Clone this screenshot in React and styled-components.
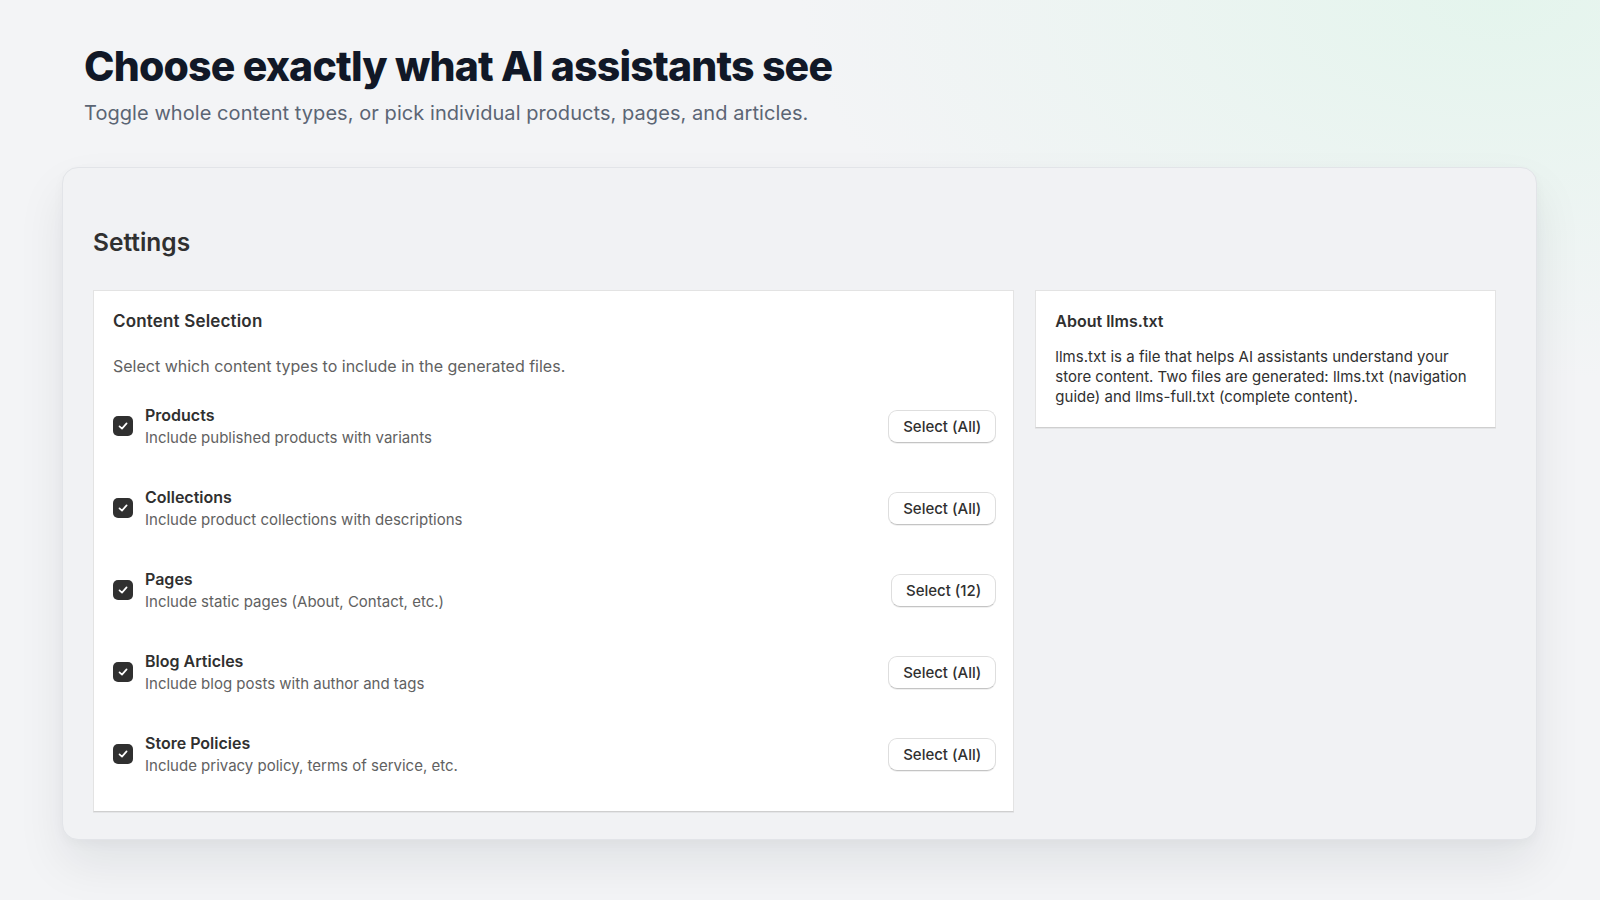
import React from "react";
import styled, { createGlobalStyle } from "styled-components";

const Global = createGlobalStyle`
  html, body { margin: 0; padding: 0; }
  body {
    font-family: Inter, "Noto Sans", sans-serif;
    background: #f3f4f6;
    -webkit-font-smoothing: antialiased;
  }
`;

const Page = styled.div`
  min-height: 900px;
  box-sizing: border-box;
  padding: 44px 63px 60px 62px;
  background:
    radial-gradient(ellipse 700px 380px at 1500px 0px, rgba(222, 245, 233, 0.7), rgba(222, 245, 233, 0) 100%),
    #f3f4f6;
`;

const Header = styled.header`
  padding-left: 22px;
  margin-bottom: 42px;
`;

const Title = styled.h1`
  margin: 0;
  font-family: Inter, "Noto Sans", sans-serif;
  font-weight: 800;
  font-size: 41px;
  line-height: 44px;
  letter-spacing: -0.02em;
  color: #111827;
`;

const Subtitle = styled.p`
  margin: 13px 0 0;
  font-size: 20px;
  line-height: 24px;
  letter-spacing: 0.003em;
  color: #5b6574;
`;

const Card = styled.section`
  background: #f1f2f4;
  border: 1px solid #e2e4e8;
  border-radius: 16px;
  box-shadow: 0 24px 48px rgba(17, 24, 39, 0.08), 0 4px 12px rgba(17, 24, 39, 0.03);
  padding: 58px 40px 27px 30px;
`;

const SectionTitle = styled.h2`
  margin: 0 0 32px;
  font-size: 24.5px;
  line-height: 32px;
  font-weight: 600;
  color: #303030;
`;

const Grid = styled.div`
  display: grid;
  grid-template-columns: 2fr 1fr;
  gap: 21px;
  align-items: start;
`;

const Panel = styled.div`
  background: #ffffff;
  border: 1px solid #e3e3e3;
  border-bottom-color: #cfcfcf;
  box-shadow: 0 1px 0 rgba(0, 0, 0, 0.05);
  padding: 18px 17px 16px 19px;
`;

const PanelTitle = styled.h3`
  margin: 0;
  font-size: ${(p) => (p.$large ? "17px" : "16px")};
  letter-spacing: ${(p) => (p.$large ? "0.01em" : "0")};
  line-height: 24px;
  font-weight: 600;
  color: #303030;
`;

const PanelText = styled.p`
  margin: ${(p) => (p.$compact ? "14px 0 4px" : "22px 0 8px")};
  font-size: ${(p) => (p.$compact ? "15px" : "16px")};
  line-height: ${(p) => (p.$compact ? "20px" : "22px")};
  color: ${(p) => (p.$compact ? "#303030" : "#616161")};
`;

const List = styled.div`
  display: flex;
  flex-direction: column;
`;

const Row = styled.div`
  display: flex;
  align-items: center;
  gap: 12px;
  padding: 18px 0;
`;

const Check = styled.span`
  flex: none;
  width: 20px;
  height: 20px;
  border-radius: 5px;
  background: #303030;
  display: inline-flex;
  align-items: center;
  justify-content: center;
`;

const RowText = styled.div`
  flex: 1;
  display: flex;
  flex-direction: column;
`;

const RowTitle = styled.span`
  font-size: 16px;
  line-height: 24px;
  font-weight: 600;
  color: #303030;
`;

const RowDesc = styled.span`
  font-size: 15px;
  line-height: 22px;
  color: #616161;
`;

const Button = styled.button`
  flex: none;
  height: 33px;
  padding: 0 14px;
  border-radius: 9px;
  background: #ffffff;
  border: 1px solid #dedede;
  border-bottom-color: #c4c4c4;
  box-shadow: 0 1px 0 rgba(0, 0, 0, 0.06);
  font-family: Inter, "Noto Sans", sans-serif;
  font-size: 15px;
  font-weight: 500;
  color: #303030;
  cursor: pointer;
`;

const CheckIcon = () => (
  <svg width="12" height="12" viewBox="0 0 12 12" fill="none">
    <path d="M2.5 6.3 L5 8.6 L9.6 3.4" stroke="#fff" strokeWidth="1.7" strokeLinecap="round" strokeLinejoin="round" />
  </svg>
);

const items = [
  { title: "Products", desc: "Include published products with variants", count: "All" },
  { title: "Collections", desc: "Include product collections with descriptions", count: "All" },
  { title: "Pages", desc: "Include static pages (About, Contact, etc.)", count: "12" },
  { title: "Blog Articles", desc: "Include blog posts with author and tags", count: "All" },
  { title: "Store Policies", desc: "Include privacy policy, terms of service, etc.", count: "All" },
];

export default function App() {
  return (
    <>
      <Global />
      <Page>
        <Header>
          <Title>Choose exactly what AI assistants see</Title>
          <Subtitle>Toggle whole content types, or pick individual products, pages, and articles.</Subtitle>
        </Header>
        <Card>
          <SectionTitle>Settings</SectionTitle>
          <Grid>
            <Panel>
              <PanelTitle $large>Content Selection</PanelTitle>
              <PanelText>Select which content types to include in the generated files.</PanelText>
              <List>
                {items.map((it) => (
                  <Row key={it.title}>
                    <Check>
                      <CheckIcon />
                    </Check>
                    <RowText>
                      <RowTitle>{it.title}</RowTitle>
                      <RowDesc>{it.desc}</RowDesc>
                    </RowText>
                    <Button>Select ({it.count})</Button>
                  </Row>
                ))}
              </List>
            </Panel>
            <Panel>
              <PanelTitle>About llms.txt</PanelTitle>
              <PanelText $compact>
                llms.txt is a file that helps AI assistants understand your store content. Two files are generated: llms.txt (navigation guide) and llms-full.txt (complete content).
              </PanelText>
            </Panel>
          </Grid>
        </Card>
      </Page>
    </>
  );
}
